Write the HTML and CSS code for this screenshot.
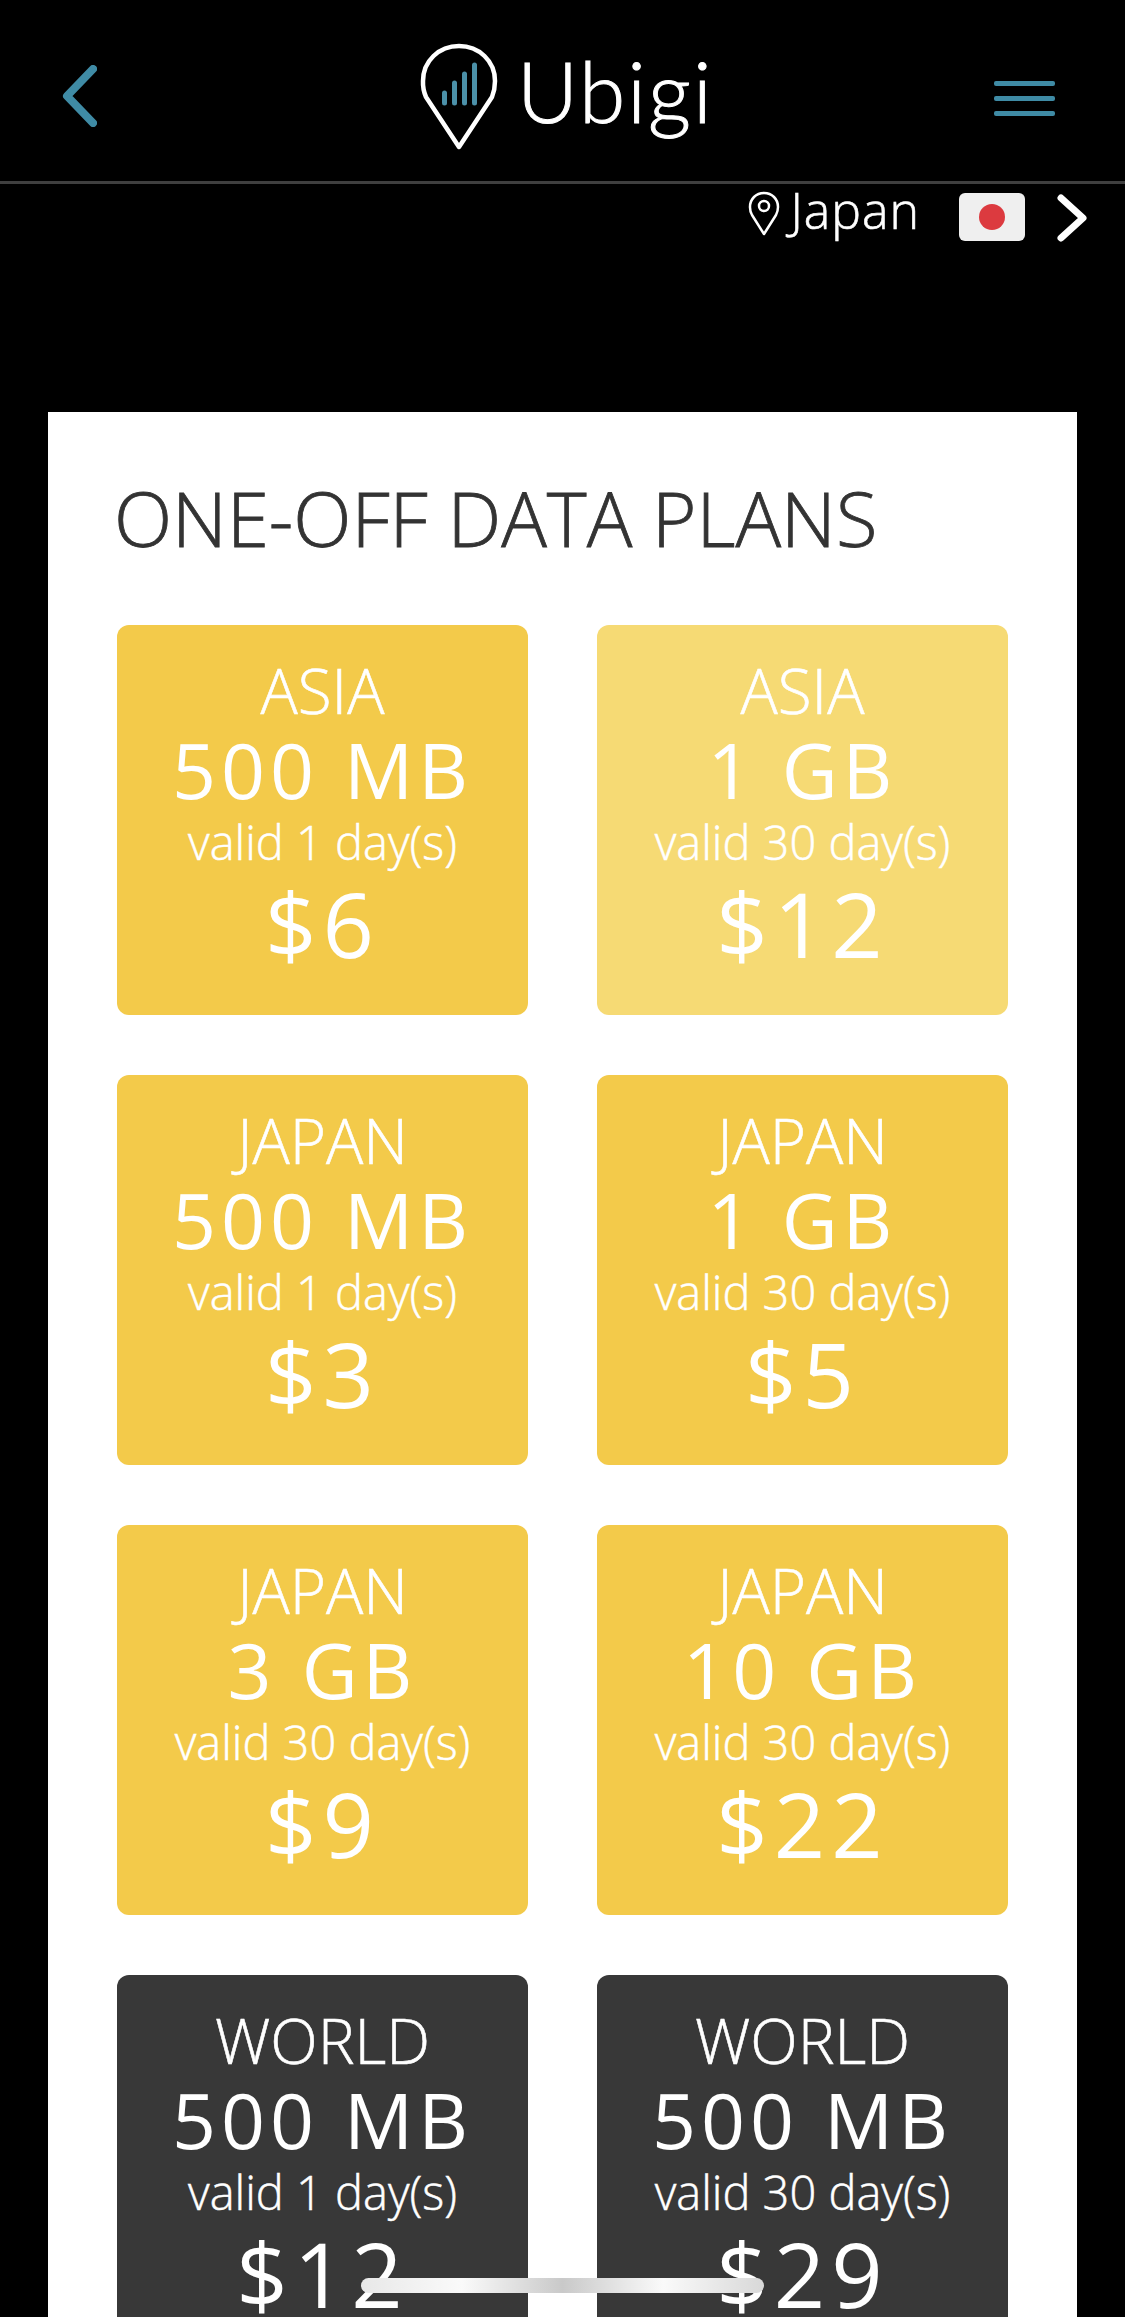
FILE: index.html
```html
<!DOCTYPE html>
<html lang="en">
<head>
<meta charset="utf-8">
<title>Ubigi</title>
<link rel="stylesheet" href="styles.css">
</head>
<body>
<div class="screen">
  <header class="topbar">
    <svg class="back" width="35" height="62" viewBox="0 0 35 62"><path d="M31 4 5 31 31 58" fill="none" stroke="#3f8ba5" stroke-width="8" stroke-linecap="round" stroke-linejoin="round"/></svg>
    <div class="logo">
      <svg class="logo-pin" width="78" height="108" viewBox="0 0 78 108">
        <path d="M39 104 6 54A36 36 0 0 1 3 38C3 18 19 3 39 3s36 15 36 35c0 6-1 11-3 16Z" fill="none" stroke="#fff" stroke-width="4.500" stroke-linejoin="round"/>
        <g stroke="#4b90a8" stroke-width="5" stroke-linecap="round">
          <path d="M24.500 50V60"/><path d="M34.500 40V60"/><path d="M44.500 31V60"/><path d="M54.500 22V60"/>
        </g>
      </svg>
      <span class="logo-text">Ubigi</span>
    </div>
    <div class="menu"><span class="menu-bar"></span><span class="menu-bar"></span><span class="menu-bar"></span></div>
  </header>
  <div class="location">
    <svg class="location-pin" width="32" height="45" viewBox="0 0 32 45"><path d="M16 43 4 24A16 16 0 0 1 2 16C2 8 8 2 16 2s14 6 14 14c0 3-1 6-2 8Z" fill="none" stroke="#fff" stroke-width="2.500" stroke-linejoin="round"/><circle cx="16" cy="15" r="5" fill="none" stroke="#fff" stroke-width="2.500"/></svg>
    <span class="location-name">Japan</span>
    <div class="flag"><span class="flag-dot"></span></div>
    <svg class="next" width="30" height="50" viewBox="0 0 30 50"><path d="M4 5 26 25 4 45" fill="none" stroke="#fff" stroke-width="7" stroke-linecap="round" stroke-linejoin="round"/></svg>
  </div>
  <main class="panel">
    <h1 class="title">ONE-OFF DATA PLANS</h1>
    <div class="plans">
      <article class="plan"><div class="region">ASIA</div><div class="size">500 MB</div><div class="valid">valid 1 day(s)</div><div class="price">$6</div></article>
      <article class="plan plan-light"><div class="region">ASIA</div><div class="size">1 GB</div><div class="valid">valid 30 day(s)</div><div class="price">$12</div></article>
      <article class="plan"><div class="region">JAPAN</div><div class="size">500 MB</div><div class="valid">valid 1 day(s)</div><div class="price">$3</div></article>
      <article class="plan"><div class="region">JAPAN</div><div class="size">1 GB</div><div class="valid">valid 30 day(s)</div><div class="price">$5</div></article>
      <article class="plan"><div class="region">JAPAN</div><div class="size">3 GB</div><div class="valid">valid 30 day(s)</div><div class="price">$9</div></article>
      <article class="plan"><div class="region">JAPAN</div><div class="size">10 GB</div><div class="valid">valid 30 day(s)</div><div class="price">$22</div></article>
      <article class="plan plan-dark"><div class="region">WORLD</div><div class="size">500 MB</div><div class="valid">valid 1 day(s)</div><div class="price">$12</div></article>
      <article class="plan plan-dark"><div class="region">WORLD</div><div class="size">500 MB</div><div class="valid">valid 30 day(s)</div><div class="price">$29</div></article>
    </div>
  </main>
  <div class="home-indicator"></div>
</div>
</body>
</html>
```
FILE: styles.css
```css
html, body { margin: 0; padding: 0; background: #000; }
.screen {
  position: relative;
  width: 1125px;
  height: 2317px;
  overflow: hidden;
  background: #000;
  font-family: "Open Sans", "Liberation Sans", sans-serif;
  color: #fff;
}
.topbar {
  box-sizing: border-box;
  height: 184px;
  border-bottom: 3px solid #3f3f3f;
  padding: 0 70px 0 62px;
  display: flex;
  align-items: flex-start;
  justify-content: space-between;
}
.back { margin-top: 65px; }
.logo {
  position: absolute;
  left: 420px;
  top: 43px;
  display: flex;
  align-items: flex-start;
  gap: 19px;
}
.logo-text {
  font-family: Lato, "Open Sans", sans-serif;
  font-weight: 300;
  font-size: 84px;
  line-height: 96px;
  letter-spacing: 2px;
  -webkit-text-stroke: 1px #fff;
  color: #fff;
}
.menu {
  margin-top: 81px;
  width: 61px;
  display: flex;
  flex-direction: column;
  gap: 10px;
}
.menu-bar { display: block; height: 5px; border-radius: 2px; background: #3f8ba5; }
.location {
  height: 60px;
  padding: 6px 38px 0 0;
  display: flex;
  justify-content: flex-end;
  align-items: flex-start;
}
.location-pin { margin-top: 1px; }
.location-name {
  margin-left: 10px;
  font-weight: 300;
  font-size: 50px;
  line-height: 40px;
  letter-spacing: 1px;
  -webkit-text-stroke: 0.6px #fff;
}
.flag {
  margin: 3px 0 0 39px;
  width: 66px;
  height: 48px;
  border-radius: 6px;
  background: #efefef;
  display: flex;
  align-items: center;
  justify-content: center;
}
.flag-dot { width: 26px; height: 26px; border-radius: 50%; background: #dc3a3f; }
.next { margin: 3px 0 0 32px; }
.panel {
  box-sizing: border-box;
  width: 1029px;
  margin: 162px 0 0 48px;
  padding: 66px 69px 0 66px;
  background: #fff;
  height: 1911px;
}
.title {
  margin: 0 0 68px;
  font-weight: 300;
  font-size: 76px;
  line-height: 79px;
  color: #333;
  -webkit-text-stroke: 0.8px #333;
}
.plans {
  display: grid;
  margin-left: 3px;
  grid-template-columns: 1fr 1fr;
  column-gap: 69px;
  row-gap: 60px;
}
.plan {
  box-sizing: border-box;
  height: 390px;
  padding-top: 29px;
  border-radius: 12px;
  background: #f3ca4a;
  text-align: center;
}
.plan-light { background: #f6da74; }
.plan-dark { background: #383838; }
.region { font-weight: 300; font-size: 62px; line-height: 72px; -webkit-text-stroke: 0.6px #fff; }
.size { font-size: 77px; line-height: 88px; letter-spacing: 5px; }
.valid { font-weight: 300; font-size: 47px; line-height: 56px; -webkit-text-stroke: 0.5px #fff; }
.price { font-size: 90px; line-height: 107px; letter-spacing: 6px; }
.home-indicator {
  position: absolute;
  left: 361px;
  top: 2278px;
  width: 403px;
  height: 15px;
  border-radius: 8px;
  background: linear-gradient(90deg, #e8e8e8, #fafafa 25%, #c9c9c9 50%, #fafafa 75%, #d8d8d8);
}
```
